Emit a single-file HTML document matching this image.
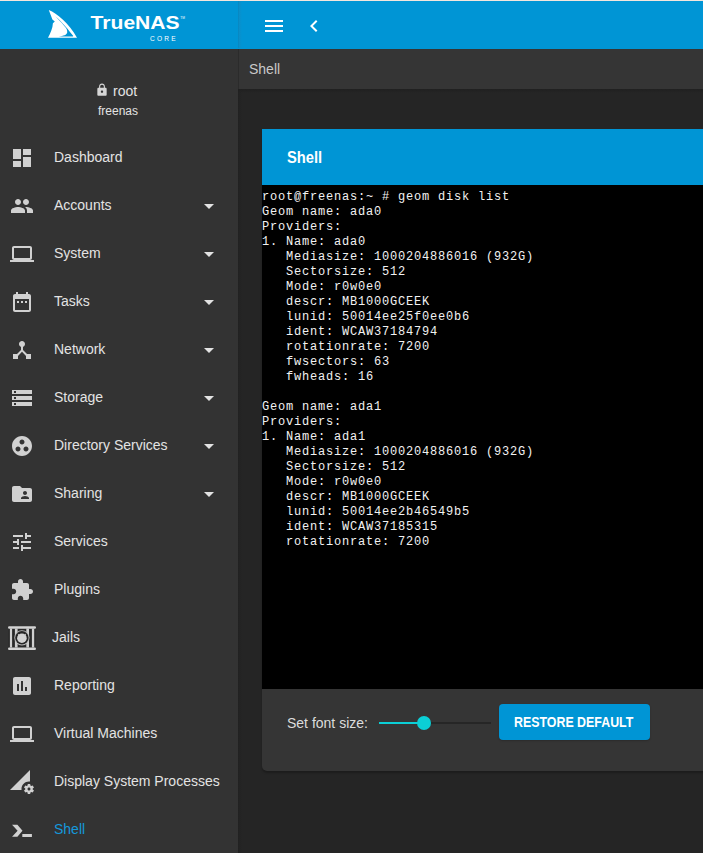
<!DOCTYPE html>
<html><head><meta charset="utf-8">
<style>
*{box-sizing:border-box;margin:0;padding:0}
html,body{width:703px;height:853px;overflow:hidden;background:#252525;font-family:"Liberation Sans",sans-serif}
#topline{position:absolute;left:0;top:0;width:703px;height:1px;background:#f3e6de}
#topbar{position:absolute;left:0;top:1px;width:703px;height:48px;background:#0095d5}
#logo{position:absolute;left:0;top:0;width:238px;height:48px}
#tbsep{position:absolute;left:238px;top:1px;width:4px;height:47px;background:linear-gradient(to right,#0785be,#0a8fcb 35%,rgba(0,149,213,0))}
#side{position:absolute;left:0;top:49px;width:238px;height:804px;background:#333333}
#sidesep{position:absolute;left:238px;top:49px;width:4px;height:804px;background:linear-gradient(to right,#212121,rgba(33,33,33,.5) 40%,rgba(33,33,33,0))}
#crumbsh{position:absolute;left:238px;top:89px;width:465px;height:4px;background:linear-gradient(to bottom,#202020,rgba(32,32,32,0))}
#crumb{position:absolute;left:239px;top:49px;width:464px;height:40px;background:#353535}
#crumb span{position:absolute;left:10px;top:12px;font-size:14px;color:#c9c9c9}
.ic{position:absolute;left:10px;width:24px;height:24px}
.ic svg{display:block;width:24px;height:24px;fill:#d1d1d1}
.item{position:absolute;left:0;width:237px;height:48px}
.item .t{position:absolute;left:54px;top:15px;font-size:14px;color:#e3e3e3;white-space:nowrap}
.item .t.act{color:#1598dc}
.item .ar{position:absolute;left:197px;top:12px;width:24px;height:24px}
.item .ar svg{fill:#e3e3e3;width:24px;height:24px;display:block}
#user{position:absolute;left:0;top:0;width:237px;height:85px}
#card{position:absolute;left:262px;top:129px;width:460px;height:642px;background:#353535;border-radius:0 0 5px 5px;overflow:hidden;box-shadow:0 2px 2px rgba(0,0,0,.25)}
#chead{position:absolute;left:0;top:0;width:100%;height:56px;background:#0095d5}
#chead span{position:absolute;left:25px;top:20px;font-size:16px;font-weight:bold;color:#fff;transform-origin:0 0;transform:scaleX(.92)}
#term{position:absolute;left:0;top:56px;width:100%;height:504px;background:#000}
#term pre{position:absolute;left:0;top:5px;font-family:"Liberation Mono",monospace;font-size:12px;letter-spacing:.8px;line-height:15px;color:#f2f2f2}
#foot{position:absolute;left:0;top:560px;width:100%;height:82px}
#btn{position:absolute;left:237px;top:15px;width:151px;height:36px;border-radius:4px;background:#0095d5;box-shadow:0 1px 2px rgba(0,0,0,.2)}
#btn span{position:absolute;left:15px;top:10px;font-size:14px;font-weight:bold;color:#fff;white-space:nowrap;transform-origin:0 0;transform:scaleX(.885)}
</style></head><body>
<div id="topline"></div>
<div id="topbar">
  <div id="logo">
    <svg width="238" height="48" viewBox="0 1 238 48" style="position:absolute;left:0;top:0">
     <path fill="#fff" d="M48.8,10 C57,13.5 69,23 77,37.8 L48,37.8 C50.5,33 52.7,28 52.9,23.2 L54.8,21.4 L52.4,19.4 Z"/>
     <path fill="#0095d5" d="M54.3,15.4 C58,17.8 65,25.2 73.3,35.9 L72.9,36.5 L58.8,36.5 C63.5,36 66.8,35 67.2,32.6 C67.5,30 66.5,28.5 65.4,27.2 C63.5,24.8 59,19.5 54.3,15.4 Z"/>
     <text x="90.6" y="28.9" fill="#fff" font-family="Liberation Sans" font-weight="bold" font-size="17.8" textLength="89" lengthAdjust="spacingAndGlyphs">TrueNAS</text>
     <text x="180.3" y="18.6" fill="#fff" font-family="Liberation Sans" font-size="3.2">TM</text>
     <text x="150" y="40.8" fill="#fff" font-family="Liberation Sans" font-size="6.6" textLength="25.6" lengthAdjust="spacing">CORE</text>
    </svg>
  </div>
  <svg style="position:absolute;left:262px;top:13px" width="24" height="24" viewBox="0 0 24 24"><path fill="#fff" d="M3 18h18v-2H3v2zm0-5h18v-2H3v2zm0-7v2h18V6H3z"/></svg>
  <svg style="position:absolute;left:302px;top:13px" width="24" height="24" viewBox="0 0 24 24"><path fill="#fff" d="M15.41 7.41L14 6l-6 6 6 6 1.41-1.41L10.83 12z"/></svg>
</div>
<div id="tbsep"></div>
<div id="side">
<div id="user">
 <svg style="position:absolute;left:95px;top:34px" width="14" height="14" viewBox="0 0 24 24"><path fill="#d6d6d6" d="M18 8h-1V6c0-2.76-2.24-5-5-5S7 3.240 7 6v2H6c-1.1 0-2 .9-2 2v10c0 1.1.9 2 2 2h12c1.1 0 2-.9 2-2V10c0-1.1-.9-2-2-2zm-6 9c-1.1 0-2-.9-2-2s.9-2 2-2 2 .9 2 2-.9 2-2 2zm3.1-9H8.9V6c0-1.71 1.39-3.1 3.1-3.1 1.71 0 3.1 1.39 3.1 3.1v2z"/></svg>
 <div style="position:absolute;left:113px;top:34px;font-size:14px;color:#e3e3e3">root</div>
 <div style="position:absolute;left:98px;top:55px;font-size:12px;color:#e3e3e3">freenas</div>
</div>
<div class="item" style="top:85px">
 <div class="ic" style="top:12px"><svg viewBox="0 0 24 24"><path d="M3 13h8V3H3v10zm0 8h8v-6H3v6zm10 0h8V11h-8v10zm0-18v6h8V3h-8z"/></svg></div>
 <div class="t">Dashboard</div>
</div>
<div class="item" style="top:133px">
 <div class="ic" style="top:12px"><svg viewBox="0 0 24 24"><path d="M16 11c1.66 0 2.99-1.34 2.99-3S17.66 5 16 5c-1.66 0-3 1.34-3 3s1.34 3 3 3zm-8 0c1.66 0 2.99-1.34 2.99-3S9.66 5 8 5C6.34 5 5 6.34 5 8s1.34 3 3 3zm0 2c-2.33 0-7 1.17-7 3.5V19h14v-2.5c0-2.33-4.67-3.5-7-3.5zm8 0c-.29 0-.62.02-.97.05 1.16.84 1.97 1.97 1.97 3.45V19h6v-2.5c0-2.33-4.67-3.5-7-3.5z"/></svg></div>
 <div class="t">Accounts</div>
 <div class="ar"><svg viewBox="0 0 24 24"><path d="M7 10l5 5 5-5z"/></svg></div>
</div>
<div class="item" style="top:181px">
 <div class="ic" style="top:12px"><svg viewBox="0 0 24 24"><path d="M20 18c1.1 0 1.99-.9 1.99-2L22 6c0-1.1-.9-2-2-2H4c-1.1 0-2 .9-2 2v10c0 1.1.9 2 2 2H0v2h24v-2h-4zM4 6h16v10H4V6z"/></svg></div>
 <div class="t">System</div>
 <div class="ar"><svg viewBox="0 0 24 24"><path d="M7 10l5 5 5-5z"/></svg></div>
</div>
<div class="item" style="top:229px">
 <div class="ic" style="top:12px"><svg viewBox="0 0 24 24"><path d="M9 11H7v2h2v-2zm4 0h-2v2h2v-2zm4 0h-2v2h2v-2zm2-7h-1V2h-2v2H8V2H6v2H5c-1.11 0-1.99.9-1.99 2L3 20c0 1.1.89 2 2 2h14c1.1 0 2-.9 2-2V6c0-1.1-.9-2-2-2zm0 16H5V9h14v11z"/></svg></div>
 <div class="t">Tasks</div>
 <div class="ar"><svg viewBox="0 0 24 24"><path d="M7 10l5 5 5-5z"/></svg></div>
</div>
<div class="item" style="top:277px">
 <div class="ic" style="top:12px"><svg viewBox="0 0 24 24"><path d="M17 16l-4-4V8.82C14.16 8.4 15 7.3 15 6c0-1.66-1.34-3-3-3S9 4.34 9 6c0 1.3.84 2.4 2 2.82V12l-4 4H3v5h5v-3.05l4-4.2 4 4.2V21h5v-5h-4z"/></svg></div>
 <div class="t">Network</div>
 <div class="ar"><svg viewBox="0 0 24 24"><path d="M7 10l5 5 5-5z"/></svg></div>
</div>
<div class="item" style="top:325px">
 <div class="ic" style="top:12px"><svg viewBox="0 0 24 24"><path d="M2 20h20v-4H2v4zm2-3h2v2H4v-2zM2 4v4h20V4H2zm4 3H4V5h2v2zm-4 7h20v-4H2v4zm2-3h2v2H4v-2z"/></svg></div>
 <div class="t">Storage</div>
 <div class="ar"><svg viewBox="0 0 24 24"><path d="M7 10l5 5 5-5z"/></svg></div>
</div>
<div class="item" style="top:373px">
 <div class="ic" style="top:12px"><svg viewBox="0 0 24 24"><path d="M12 2C6.48 2 2 6.48 2 12s4.48 10 10 10 10-4.48 10-10S17.52 2 12 2zM8 17.5c-1.38 0-2.5-1.12-2.5-2.5s1.12-2.5 2.5-2.5 2.5 1.12 2.5 2.5-1.12 2.5-2.5 2.5zM9.5 8c0-1.38 1.12-2.5 2.5-2.5s2.5 1.12 2.5 2.5-1.12 2.5-2.5 2.5S9.5 9.38 9.5 8zm6.5 9.5c-1.38 0-2.5-1.12-2.5-2.5s1.12-2.5 2.5-2.5 2.5 1.12 2.5 2.5-1.12 2.5-2.5 2.5z"/></svg></div>
 <div class="t">Directory Services</div>
 <div class="ar"><svg viewBox="0 0 24 24"><path d="M7 10l5 5 5-5z"/></svg></div>
</div>
<div class="item" style="top:421px">
 <div class="ic" style="top:12px"><svg viewBox="0 0 24 24"><path d="M20 6h-8l-2-2H4c-1.1 0-1.99.9-1.99 2L2 18c0 1.1.9 2 2 2h16c1.1 0 2-.9 2-2V8c0-1.1-.9-2-2-2zm-5 3c1.1 0 2 .9 2 2s-.9 2-2 2-2-.9-2-2 .9-2 2-2zm4 8h-8v-1c0-1.33 2.67-2 4-2s4 .67 4 2v1z"/></svg></div>
 <div class="t">Sharing</div>
 <div class="ar"><svg viewBox="0 0 24 24"><path d="M7 10l5 5 5-5z"/></svg></div>
</div>
<div class="item" style="top:469px">
 <div class="ic" style="top:12px"><svg viewBox="0 0 24 24"><path d="M3 17v2h6v-2H3zM3 5v2h10V5H3zm10 16v-2h8v-2h-8v-2h-2v6h2zM7 9v2H3v2h4v2h2V9H7zm14 4v-2H11v2h10zm-6-4h2V7h4V5h-4V3h-2v6z"/></svg></div>
 <div class="t">Services</div>
</div>
<div class="item" style="top:517px">
 <div class="ic" style="top:12px"><svg viewBox="0 0 24 24"><path d="M20.5 11H19V7c0-1.1-.9-2-2-2h-4V3.5C13 2.12 11.88 1 10.5 1S8 2.12 8 3.5V5H4c-1.1 0-1.99.9-1.99 2v3.8H3.5c1.49 0 2.7 1.21 2.7 2.7s-1.21 2.7-2.7 2.7H2V20c0 1.1.9 2 2 2h3.8v-1.5c0-1.49 1.21-2.7 2.7-2.7 1.49 0 2.7 1.21 2.7 2.7V22H17c1.1 0 2-.9 2-2v-4h1.5c1.38 0 2.5-1.12 2.5-2.5S21.88 11 20.5 11z"/></svg></div>
 <div class="t">Plugins</div>
</div>
<div class="item" style="top:565px">
 <div class="ic" style="top:12px"><svg style="position:absolute;left:-10px;top:-12px;width:44px;height:48px" width="44" height="48" viewBox="0 614 44 48">
  <rect x="8.5" y="628.5" width="27" height="19" fill="#292929"/>
  <rect x="9.9" y="628.5" width="2.2" height="19" fill="#cfcfcf"/>
  <rect x="14.9" y="628.5" width="2.7" height="19" fill="#cfcfcf"/>
  <rect x="26.3" y="628.5" width="2.7" height="19" fill="#cfcfcf"/>
  <rect x="31.9" y="628.5" width="2.3" height="19" fill="#cfcfcf"/>
  <circle cx="21.9" cy="637.8" r="7.6" fill="#bdbdbd"/>
  <circle cx="21.9" cy="637.8" r="6.7" fill="#262626"/>
  <circle cx="21.9" cy="638.2" r="4.8" fill="#d2d2d2"/>
  <path fill="#cfcfcf" d="M17.6,633.6 L20,635.2 L18.6,636.6 Z M26.2,633.6 L23.8,635.2 L25.2,636.6 Z"/>
  <rect x="8" y="626.3" width="28" height="2.5" rx="1.25" fill="#d4d4d4"/>
  <rect x="8" y="647.4" width="28" height="2.5" rx="1.25" fill="#d4d4d4"/>
</svg></div>
 <div class="t" style="left:52px">Jails</div>
</div>
<div class="item" style="top:613px">
 <div class="ic" style="top:12px"><svg viewBox="0 0 24 24"><path d="M19 3H5c-1.1 0-2 .9-2 2v14c0 1.1.9 2 2 2h14c1.1 0 2-.9 2-2V5c0-1.1-.9-2-2-2zM9 17H7v-7h2v7zm4 0h-2V7h2v10zm4 0h-2v-4h2v4z"/></svg></div>
 <div class="t">Reporting</div>
</div>
<div class="item" style="top:661px">
 <div class="ic" style="top:12px"><svg viewBox="0 0 24 24"><path d="M20 18c1.1 0 1.99-.9 1.99-2L22 6c0-1.1-.9-2-2-2H4c-1.1 0-2 .9-2 2v10c0 1.1.9 2 2 2H0v2h24v-2h-4zM4 6h16v10H4V6z"/></svg></div>
 <div class="t">Virtual Machines</div>
</div>
<div class="item" style="top:709px">
 <div class="ic" style="top:12px"><svg viewBox="0 0 24 24"><path d="M18.99 11.5c.34 0 .67.03 1 .07L20 0 0 20h11.56c-.04-.33-.07-.66-.07-1 0-4.14 3.36-7.5 7.5-7.5zm3.71 7.99c.02-.16.04-.32.04-.49 0-.17-.01-.33-.04-.49l1.06-.83c.09-.08.12-.21.06-.32l-1-1.73c-.06-.11-.19-.15-.31-.11l-1.24.5c-.26-.2-.54-.37-.85-.49l-.19-1.32c-.01-.12-.12-.21-.24-.21h-2c-.12 0-.23.09-.25.21l-.19 1.32c-.3.13-.59.29-.85.49l-1.24-.5c-.11-.04-.24 0-.31.11l-1 1.73c-.06.11-.04.24.06.32l1.06.83c-.02.16-.03.32-.03.49 0 .17.01.33.03.49l-1.06.83c-.09.08-.12.21-.06.32l1 1.73c.06.11.19.15.31.11l1.24-.5c.26.2.54.37.85.49l.19 1.32c.02.12.12.21.25.21h2c.12 0 .23-.09.25-.21l.19-1.32c.3-.13.59-.29.84-.49l1.25.5c.11.04.24 0 .31-.11l1-1.73c.06-.11.03-.24-.06-.32l-1.07-.83zm-3.71 1.01c-.83 0-1.5-.67-1.5-1.5s.67-1.5 1.5-1.5 1.5.67 1.5 1.5-.67 1.5-1.5 1.5z"/></svg></div>
 <div class="t">Display System Processes</div>
</div>
<div class="item" style="top:757px">
 <div class="ic" style="top:12px"><svg style="position:absolute;left:-10px;top:-12px;width:44px;height:48px" width="44" height="48" viewBox="0 806 44 48">
  <path fill="#d1d1d1" d="M12.05,824.8 L17.4,824.8 L22.5,830.8 L17.4,836.8 L12.05,836.8 L17.6,830.8 Z"/>
  <rect x="22.3" y="834" width="9.6" height="3" fill="#d1d1d1"/>
</svg></div>
 <div class="t act">Shell</div>
</div>
</div>
<div id="sidesep"></div>
<div id="crumbsh"></div>
<div id="crumb"><span>Shell</span></div>
<div style="position:absolute;left:238px;top:49px;width:1px;height:40px;background:#2b2b2b"></div>
<div id="card">
  <div id="chead"><span>Shell</span></div>
  <div id="term"><pre>root@freenas:~ # geom disk list
Geom name: ada0
Providers:
1. Name: ada0
   Mediasize: 1000204886016 (932G)
   Sectorsize: 512
   Mode: r0w0e0
   descr: MB1000GCEEK
   lunid: 50014ee25f0ee0b6
   ident: WCAW37184794
   rotationrate: 7200
   fwsectors: 63
   fwheads: 16

Geom name: ada1
Providers:
1. Name: ada1
   Mediasize: 1000204886016 (932G)
   Sectorsize: 512
   Mode: r0w0e0
   descr: MB1000GCEEK
   lunid: 50014ee2b46549b5
   ident: WCAW37185315
   rotationrate: 7200</pre></div>
  <div id="foot">
   <div style="position:absolute;left:25px;top:26px;font-size:14px;color:#dcdcdc">Set font size:</div>
   <div style="position:absolute;left:117px;top:33px;width:112px;height:2px;background:#262626"></div>
   <div style="position:absolute;left:117px;top:33px;width:45px;height:2px;background:#0bcfd6"></div>
   <div style="position:absolute;left:155px;top:27px;width:14px;height:14px;border-radius:50%;background:#0bcfd6"></div>
   <div id="btn"><span>RESTORE DEFAULT</span></div>
  </div>
</div>
</body></html>
